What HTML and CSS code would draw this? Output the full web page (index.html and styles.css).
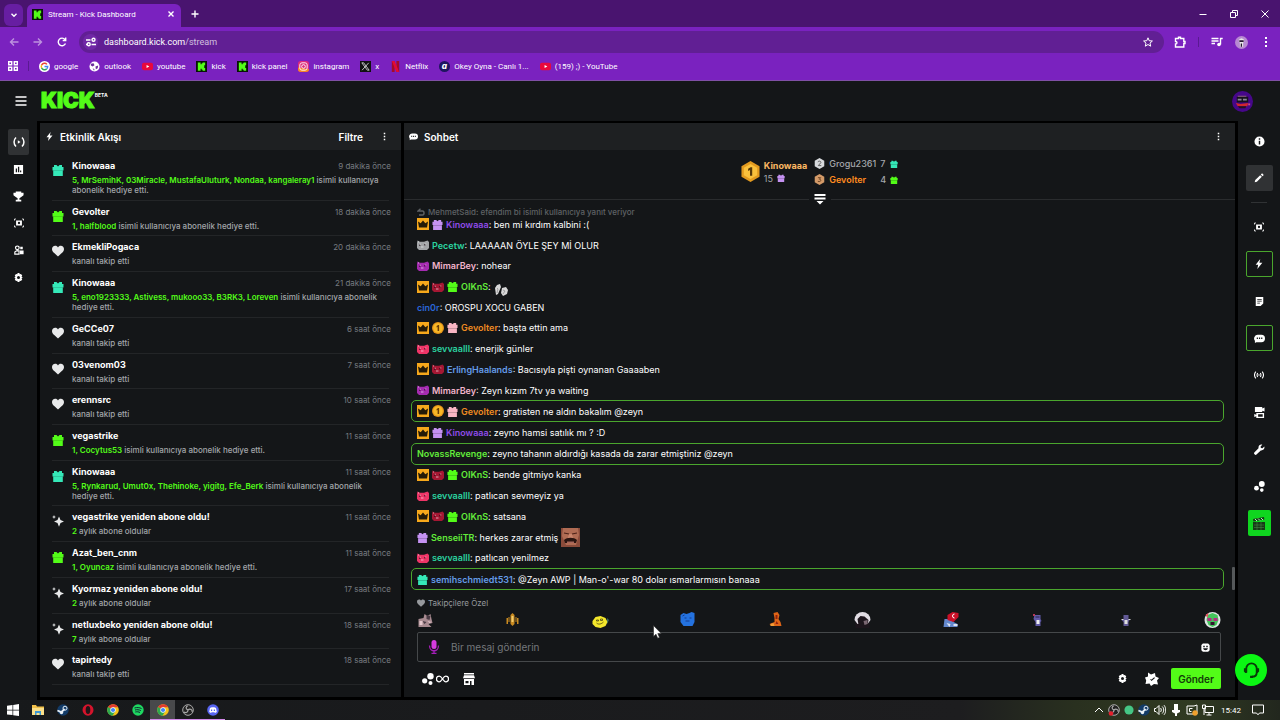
FILE: index.html
```html
<!DOCTYPE html>
<html lang="tr">
<head>
<meta charset="utf-8">
<title>Stream - Kick Dashboard</title>
<link rel="stylesheet" href="styles.css">
</head>
<body>
<svg class="sprite" aria-hidden="true">
  <symbol id="gift" viewBox="0 0 12 12"><path d="M2 1h2.500l1.500 1.500L7.500 1H10v2h1.500v3.500H.5V3H2zM1.200 6.800h9.600V12H1.200z"/><path d="M1.200 6.200h9.600v.8H1.200z" opacity=".45"/></symbol>
  <symbol id="heart" viewBox="0 0 12 12"><path d="M3.200.8C4.500.8 5.500 1.500 6 2.400 6.500 1.500 7.500.8 8.800.8 10.700.8 12 2.200 12 4c0 1.700-.9 2.800-2.200 4.100L6 11.500 2.200 8.100C.9 6.800 0 5.700 0 4 0 2.200 1.300.8 3.200.8z"/></symbol>
  <symbol id="sparkle" viewBox="0 0 12 12"><path d="M7 1.500l1.500 3.500L12 6.500 8.500 8 7 11.800 5.500 8 2 6.500 5.500 5z"/><path d="M2 0l.6 1.400L4 2l-1.400.6L2 4l-.6-1.400L0 2l1.400-.6z"/></symbol>
  <symbol id="bolt" viewBox="0 0 12 12"><path d="M7.500 0L2 7h3L4 12l6-7.500H6.500z"/></symbol>
  <symbol id="dots" viewBox="0 0 12 12"><path d="M5 1h2v2H5zM5 5h2v2H5zM5 9h2v2H5z"/></symbol>
  <symbol id="chat" viewBox="0 0 12 12"><path fill-rule="evenodd" d="M4 2h4a4 4 0 0 1 0 8H2.500L1 11V8.500A4 4 0 0 1 4 2zM3 5v1.500h1.300V5zm2.400 0v1.500h1.300V5zm2.400 0v1.500h1.300V5z"/></symbol>
  <symbol id="gear" viewBox="0 0 12 12"><path fill-rule="evenodd" d="M4.800 0h2.400l.4 1.700 1.700-.5 1.700 2-1 1.400L11.500 6 10 7.400l1 1.400-1.700 2-1.700-.5L7.200 12H4.800l-.4-1.700-1.700.5L1 8.800l1-1.400L.5 6 2 4.600 1 3.200l1.700-2 1.700.5zM6 4a2 2 0 1 0 0 4 2 2 0 0 0 0-4z"/></symbol>
  <symbol id="live" viewBox="0 0 12 12"><path d="M3 1.500C.4 4 .4 8 3 10.500M9 1.500c2.600 2.500 2.600 6.500 0 9" fill="none" stroke="currentColor" stroke-width="1.500"/><path d="M4.800 4.200l2.700 1.800-2.700 1.800z"/></symbol>
  <symbol id="cast" viewBox="0 0 12 12"><path d="M2.200 2C.2 4.500.2 7.500 2.200 10M9.800 2c2 2.500 2 5.500 0 8M4.400 3.500c-1 1.700-1 3.300 0 5M7.600 3.500c1 1.700 1 3.300 0 5" fill="none" stroke="currentColor" stroke-width="1.300"/><path d="M5.400 5.200h1.200v1.600H5.400z"/></symbol>
  <symbol id="chart" viewBox="0 0 12 12"><path fill-rule="evenodd" d="M1 1h10v10H1zM3 5v4h1.400V5zm2.400-2v6h1.400V3zm2.300 4v2H9V7z"/></symbol>
  <symbol id="cup" viewBox="0 0 12 12"><path d="M3 .5h6V2h2.500v2.500L9 6.500 7 8v1.500h2V11.500H3V9.500h2V8L3 6.500.5 4.500V2H3z"/></symbol>
  <symbol id="scene" viewBox="0 0 12 12"><path fill-rule="evenodd" d="M2.500 3h7v6h-7zM6 4.600a1.400 1.400 0 1 0 0 2.800 1.400 1.400 0 0 0 0-2.800z"/><path d="M.6 3V1.200H2.300M9.700 1.200h1.700V3M11.400 9v1.800H9.700M2.300 10.800H.6V9" fill="none" stroke="currentColor"/></symbol>
  <symbol id="people" viewBox="0 0 12 12"><path d="M1 11V8.500l2-1.500h3v4zM4 1.200A2.200 2.200 0 1 1 4 5.600 2.200 2.200 0 0 1 4 1.200z" fill="none" stroke="currentColor" stroke-width="1.400"/><path d="M7.500 2h3v3.200h-3zM7 6.500h4.500V11H7z"/></symbol>
  <symbol id="info" viewBox="0 0 12 12"><path fill-rule="evenodd" d="M6 .5a5.500 5.500 0 1 1 0 11 5.500 5.500 0 0 1 0-11zM5.200 2.500v1.600h1.600V2.500zm0 2.700v4.200h1.600V5.200z"/></symbol>
  <symbol id="pen" viewBox="0 0 12 12"><path d="M8.200 1.800L9.700.3l2 2-1.500 1.500zM7.400 2.600l2 2L3.500 10.500.8 11.200l.7-2.700z"/></symbol>
  <symbol id="note" viewBox="0 0 12 12"><path fill-rule="evenodd" d="M1 0h10v8.500L7.500 12H1zM3 2.500v1h6v-1zm0 2.500v1h6V5zm0 2.500v1h3.500v-1z"/></symbol>
  <symbol id="screens" viewBox="0 0 12 12"><path fill-rule="evenodd" d="M1 0h8v1.500L11.500.5V5L9 4v1.500H1zM2.500 6.500h8.500V12H2.500V10L.3 11V7.500l2.200 1zM4.500 8v2.500h5V8z"/></symbol>
  <symbol id="wrench" viewBox="0 0 12 12"><path d="M11.200 2.800L9.300 4.600 7.500 4.300 7.200 2.600 9 .7C7 0 4.600 1.500 4.900 4.600L.6 8.900a1.600 1.600 0 0 0 2.400 2.400l4.400-4.300c3 .3 4.600-2 3.800-4.200z"/></symbol>
  <symbol id="bubbles" viewBox="0 0 12 12"><circle cx="8.500" cy="3.300" r="3.200"/><circle cx="2.700" cy="7.800" r="2.600"/><circle cx="8.500" cy="9.900" r="2"/></symbol>
  <symbol id="k" viewBox="0 0 12 12"><path fill="#071407" d="M0 0h12v12H0z"/><path fill="#53fc18" d="M2 1.500h3v2h1.200v-1h1v-1H10v3H9v3h1v3H7.200v-1h-1v-1H5v2H2z"/></symbol>
  <symbol id="yt" viewBox="0 0 12 12"><rect y="2" width="12" height="8" rx="2" fill="#e8083c"/><path d="M5 4.300L8 6 5 7.700z" fill="#fff"/></symbol>
  <symbol id="chrome" viewBox="0 0 12 12"><circle cx="6" cy="6" r="5.800" fill="#f4c41c"/><path d="M6 6L1 3.100A5.800 5.800 0 0 1 11.200 3.300H6z" fill="#e33b2e"/><path d="M6 6L1 3.100A5.800 5.800 0 0 0 5.500 11.800L8.300 7.300z" fill="#2da94f"/><circle cx="6" cy="6" r="2.700" fill="#fff"/><circle cx="6" cy="6" r="2.100" fill="#4285f4"/></symbol>
  <symbol id="crown" viewBox="0 0 12 12"><path fill="#f7a81b" d="M0 0h12v12H0z"/><path fill="#241a08" d="M1 3.500l2.700 1.700L6 2.500l2.300 2.700L11 3.500 10 9.500H2z"/></symbol>
  <symbol id="coin" viewBox="0 0 12 12"><circle cx="6" cy="6" r="6" fill="#e69318"/><circle cx="6" cy="6" r="4.800" fill="#f8b827"/><path d="M4.600 4L6.200 3h.9v6H5.600V5l-1 .4z" fill="#6a3d05"/></symbol>
  <symbol id="cat" viewBox="0 0 12 12"><path d="M.5 1.500L3 2.800h4L10.500 1.500 12 3v6l-2 2H2L0 9V4z"/><path d="M2 5.500h1.500V7H2zM7 5h1.500v1.500H7z" fill="#1b0710" opacity=".6"/><path d="M4 7.500h2.500v1H4zM2.800 4.800h1v1h-1zM8.300 4.500h1v1h-1zM1 2.500h1v1H1z" fill="#fff" opacity=".6"/></symbol>
  <symbol id="obs" viewBox="0 0 12 12"><circle cx="6" cy="6" r="5.300" fill="#222" stroke="#aaa"/><path d="M6 6C3 5 4 2 6 2M6 6c2-2 5 0 4 2M6 6c0 3-3 3-4 2" fill="none" stroke="#aaa" stroke-width="1.200"/></symbol>
  <symbol id="steam" viewBox="0 0 12 12"><circle cx="6" cy="6" r="5.700" fill="#123b68"/><path d="M.4 6.500l4 1.600L7.500 5" fill="none" stroke="#e7eff6" stroke-width="1.800"/><circle cx="8" cy="4.200" r="2" fill="none" stroke="#e7eff6"/><circle cx="4.500" cy="8.500" r="1.700" fill="#e7eff6"/></symbol>
</svg>

<header class="browser">
  <div class="tabstrip">
    <button class="tab-search" aria-label="Sekme ara"><svg class="i8" viewBox="0 0 8 8"><path d="M1.500 2.700L4 5.200l2.500-2.500" class="line"/></svg></button>
    <div class="tab"><svg class="i11"><use href="#k"/></svg><span>Stream - Kick Dashboard</span><button aria-label="Kapat"><svg class="i8" viewBox="0 0 8 8"><path d="M1.500 1.500l5 5m0-5l-5 5" class="line"/></svg></button></div>
    <button class="newtab" aria-label="Yeni sekme"><svg class="i8" viewBox="0 0 8 8"><path d="M4 .5v7M.5 4h7" class="line"/></svg></button>
    <div class="window-controls">
      <button aria-label="Küçült"><svg class="i8" viewBox="0 0 8 8"><path d="M.5 4.500h7" class="thin"/></svg></button>
      <button aria-label="Önceki boyut"><svg class="i8" viewBox="0 0 8 8"><path d="M.5 2.500h5v5h-5zM2.500 2.500v-2h5v5h-2" class="thin"/></svg></button>
      <button aria-label="Pencereyi kapat"><svg class="i8" viewBox="0 0 8 8"><path d="M.5.5l7 7m0-7l-7 7" class="thin"/></svg></button>
    </div>
  </div>
  <div class="toolbar">
    <button class="nav dim" aria-label="Geri"><svg class="i10" viewBox="0 0 10 10"><path d="M9.500 5H1.500M5 1.500L1.500 5 5 8.500" class="line"/></svg></button>
    <button class="nav dim" aria-label="İleri"><svg class="i10" viewBox="0 0 10 10"><path d="M.5 5h8M5 1.500L8.500 5 5 8.500" class="line"/></svg></button>
    <button aria-label="Yenile"><svg class="i10" viewBox="0 0 10 10"><path d="M8.500 6.500A3.800 3.800 0 1 1 8 2.500M8.700.5v3H5.700" class="line"/></svg></button>
    <div class="omnibox">
      <button class="site" aria-label="Site bilgileri"><svg class="i10" viewBox="0 0 10 10"><path d="M0 3h4.500M5.500 7.500H10M0 7.500h1" class="line"/><circle cx="7.500" cy="2.800" r="1.500" class="line"/><circle cx="2.700" cy="7.300" r="1.500" class="line"/></svg></button>
      <span class="url">dashboard.kick.com<span>/stream</span></span>
      <button aria-label="Yer işareti"><svg class="i10" viewBox="0 0 10 10"><path d="M5 .8l1.200 2.900 3.200.3-2.400 2.100.7 3.100L5 7.500 2.300 9.200 3 6.100.6 4l3.200-.3z" class="thin"/></svg></button>
    </div>
    <button aria-label="Uzantılar"><svg class="i12" viewBox="0 0 12 12"><path d="M1.500 2.500h3V1.300h2v1.200h3.300v3H11v2H9.800V11H1.500V8c2 0 2-2.500 0-2.500z" class="line"/></svg></button>
    <span class="rule"></span>
    <button aria-label="Medya"><svg class="i12" viewBox="0 0 12 12"><path d="M.5 2.500h7M.5 5h7M.5 7.500h3.500M9.500 8.500V2.500h2.200" class="line"/><circle cx="8" cy="8.500" r="1.800" fill="currentColor"/></svg></button>
    <button aria-label="Profil"><svg class="i13" viewBox="0 0 12 12"><circle cx="6" cy="6" r="6" fill="#b789d2"/><path d="M4 3l2-1 2 1 .5 2-1 1v4h-3V6l-1-1z" fill="#e8e8e8"/><path d="M4 4h4v1.500H4zM5.300 7h1.200v3H5.300z" fill="#281535"/></svg></button>
    <button aria-label="Menü"><svg class="i12"><use href="#dots"/></svg></button>
  </div>
  <nav class="bookmarks">
    <a href="#" aria-label="Uygulamalar"><svg class="i10" viewBox="0 0 10 10"><path d="M.7.7h3v3h-3zM6.300.7h3v3h-3zM.7 6.300h3v3h-3zM6.300 6.300h3v3h-3z" class="line"/></svg></a>
    <span class="rule"></span>
    <a href="#"><svg class="i11" viewBox="0 0 12 12"><circle cx="6" cy="6" r="6" fill="#fff"/><path d="M8.700 3.700A3.500 3.500 0 0 0 2.800 4.500" fill="none" stroke="#e94235" stroke-width="1.500"/><path d="M2.800 4.500a3.500 3.500 0 0 0 0 3" fill="none" stroke="#fbbc04" stroke-width="1.500"/><path d="M2.800 7.500a3.500 3.500 0 0 0 5.700 1" fill="none" stroke="#34a853" stroke-width="1.500"/><path d="M6 6h3.500A3.500 3.500 0 0 1 8.500 8.500" fill="none" stroke="#4285f4" stroke-width="1.500"/></svg>google</a>
    <a href="#"><svg class="i11" viewBox="0 0 12 12"><circle cx="6" cy="6" r="5.500" fill="#fff"/><path d="M2 3l3-.5 1 2L4 6 2 5zM7 6l3-1-.5 3-2 1zM4 8l2 1-.5 1.500z" fill="#6b2d9c"/></svg>outlook</a>
    <a href="#"><svg class="i11"><use href="#yt"/></svg>youtube</a>
    <a href="#"><svg class="i11"><use href="#k"/></svg>kick</a>
    <a href="#"><svg class="i11"><use href="#k"/></svg>kick panel</a>
    <a href="#"><svg class="i11" viewBox="0 0 12 12"><rect width="12" height="12" rx="3" fill="#dd2a7b"/><path d="M0 7l12 2v0a3 3 0 0 1-3 3H3a3 3 0 0 1-3-3z" fill="#f58529"/><rect x="2" y="2" width="8" height="8" rx="2.300" fill="none" stroke="#fff"/><circle cx="6" cy="6" r="2" fill="none" stroke="#fff"/></svg>instagram</a>
    <a href="#"><svg class="i11" viewBox="0 0 12 12"><path d="M0 0h12v12H0z" fill="#111"/><path d="M2 2h2l6 8H8zM9.500 2L2.300 10" fill="none" stroke="#ccc"/></svg>x</a>
    <a href="#"><svg class="i11" viewBox="0 0 12 12"><path d="M2 0h3v12H2zM7 0h3v12H7z" fill="#a50b28"/><path d="M2 0h3l5 12H7z" fill="#e50933"/></svg>Netflix</a>
    <a href="#"><svg class="i11" viewBox="0 0 12 12"><circle cx="6" cy="6" r="6" fill="#1f1560"/><text x="3" y="9" font-family="Inter" font-size="9" font-weight="800" font-style="italic" fill="#fff">a</text></svg>Okey Oyna - Canlı 1...</a>
    <a href="#"><svg class="i11"><use href="#yt"/></svg>(159) ;) - YouTube</a>
  </nav>
</header>

<div class="appbar">
  <button aria-label="Menü"><svg class="i12" viewBox="0 0 12 12"><path d="M.5 2h11M.5 6h11M.5 10h11" class="line"/></svg></button>
  <a href="#" class="logo">KICK<sup>BETA</sup></a>
  <button class="avatar" aria-label="Hesap"><svg viewBox="0 0 22 22"><circle cx="11" cy="11" r="11" fill="#46078a"/><path d="M5 6h12v6H5z" fill="#17121e"/><path d="M6 5h9v1H6z" fill="#8c6a72"/><path d="M6 8h4v2H6zM11.500 8h4v2h-4z" fill="#8c8799"/><path d="M4 12.500l5 1 8-1-1 3.500H6z" fill="#d1262e"/><path d="M6 16h9l-1 2H8z" fill="#27101c"/><path d="M17 13h2v2h-2z" fill="#c64a8a"/></svg></button>
</div>

<div class="workspace">
  <nav class="side">
    <button class="on" aria-label="Yayın"><svg class="i12"><use href="#live"/></svg></button>
    <button aria-label="Analiz"><svg class="i11"><use href="#chart"/></svg></button>
    <button aria-label="Başarımlar"><svg class="i11"><use href="#cup"/></svg></button>
    <button aria-label="Klipler"><svg class="i10"><use href="#scene"/></svg></button>
    <button aria-label="Topluluk"><svg class="i10"><use href="#people"/></svg></button>
    <button aria-label="Ayarlar"><svg class="i9"><use href="#gear"/></svg></button>
  </nav>

  <section class="panel activity">
    <header class="panel-head"><svg class="i9"><use href="#bolt"/></svg><h2>Etkinlik Akışı</h2><button class="filter">Filtre</button><button aria-label="Seçenekler"><svg class="i9"><use href="#dots"/></svg></button></header>
    <ul class="events">
      <li><svg class="i12 teal"><use href="#gift"/></svg><div><div class="top"><b>Kinowaaa</b><time>9 dakika önce</time></div><p><em>5, MrSemihK, 03Miracle, MustafaUluturk, Nondaa, kangaleray1</em> isimli kullanıcıya abonelik hediye etti.</p></div></li>
      <li><svg class="i12 green"><use href="#gift"/></svg><div><div class="top"><b>Gevolter</b><time>18 dakika önce</time></div><p><em>1, halfblood</em> isimli kullanıcıya abonelik hediye etti.</p></div></li>
      <li><svg class="i12"><use href="#heart"/></svg><div><div class="top"><b>EkmekliPogaca</b><time>20 dakika önce</time></div><p>kanalı takip etti</p></div></li>
      <li><svg class="i12 teal"><use href="#gift"/></svg><div><div class="top"><b>Kinowaaa</b><time>21 dakika önce</time></div><p><em>5, eno1923333, Astivess, mukooo33, B3RK3, Loreven</em> isimli kullanıcıya abonelik hediye etti.</p></div></li>
      <li><svg class="i12"><use href="#heart"/></svg><div><div class="top"><b>GeCCe07</b><time>6 saat önce</time></div><p>kanalı takip etti</p></div></li>
      <li><svg class="i12"><use href="#heart"/></svg><div><div class="top"><b>03venom03</b><time>7 saat önce</time></div><p>kanalı takip etti</p></div></li>
      <li><svg class="i12"><use href="#heart"/></svg><div><div class="top"><b>erennsrc</b><time>10 saat önce</time></div><p>kanalı takip etti</p></div></li>
      <li><svg class="i12 green"><use href="#gift"/></svg><div><div class="top"><b>vegastrike</b><time>11 saat önce</time></div><p><em>1, Cocytus53</em> isimli kullanıcıya abonelik hediye etti.</p></div></li>
      <li><svg class="i12 teal"><use href="#gift"/></svg><div><div class="top"><b>Kinowaaa</b><time>11 saat önce</time></div><p><em>5, Rynkarud, Umut0x, Thehinoke, yigitg, Efe_Berk</em> isimli kullanıcıya abonelik hediye etti.</p></div></li>
      <li><svg class="i12"><use href="#sparkle"/></svg><div><div class="top"><b>vegastrike yeniden abone oldu!</b><time>11 saat önce</time></div><p><em>2</em> aylık abone oldular</p></div></li>
      <li><svg class="i12 green"><use href="#gift"/></svg><div><div class="top"><b>Azat_ben_cnm</b><time>11 saat önce</time></div><p><em>1, Oyuncaz</em> isimli kullanıcıya abonelik hediye etti.</p></div></li>
      <li><svg class="i12"><use href="#sparkle"/></svg><div><div class="top"><b>Kyormaz yeniden abone oldu!</b><time>17 saat önce</time></div><p><em>2</em> aylık abone oldular</p></div></li>
      <li><svg class="i12"><use href="#sparkle"/></svg><div><div class="top"><b>netluxbeko yeniden abone oldu!</b><time>18 saat önce</time></div><p><em>7</em> aylık abone oldular</p></div></li>
      <li><svg class="i12"><use href="#heart"/></svg><div><div class="top"><b>tapirtedy</b><time>18 saat önce</time></div><p>kanalı takip etti</p></div></li>
    </ul>
  </section>

  <section class="panel chat">
    <header class="panel-head"><svg class="i9"><use href="#chat"/></svg><h2>Sohbet</h2><button class="end" aria-label="Seçenekler"><svg class="i9"><use href="#dots"/></svg></button></header>
    <div class="leaders">
      <svg class="medal" viewBox="0 0 20 22"><path d="M10 0l9.500 5.500v11L10 22 .5 16.500v-11z" fill="#e39a1f"/><path d="M10 3l7 4v8l-7 4-7-4V7z" fill="#fbc13c"/><path d="M7.500 8.200L10 6.500h1.800v9H9.500v-6l-2 1z" fill="#54370a"/></svg>
      <div class="first"><b>Kinowaaa</b><span>15 <svg class="i8 lilac"><use href="#gift"/></svg></span></div>
      <div class="rest">
        <svg class="i11" viewBox="0 0 12 12"><path d="M6 0l5.200 3v6L6 12 .8 9V3z" fill="#d7d9dc"/><path d="M4.300 4.500C4.500 3 7.700 3 7.500 5L4.700 8.300h3.200" fill="none" stroke="#555"/></svg><span>Grogu2361</span><span>7</span><svg class="i8 teal"><use href="#gift"/></svg>
        <svg class="i11" viewBox="0 0 12 12"><path d="M6 0l5.200 3v6L6 12 .8 9V3z" fill="#d39a68"/><path d="M4.300 4h3L5.800 5.700c2.800 0 2 3.500-1.600 2.300" fill="none" stroke="#694020"/></svg><b>Gevolter</b><span>4</span><svg class="i8 green"><use href="#gift"/></svg>
      </div>
    </div>
    <div class="handle"><button aria-label="Genişlet"><svg class="i12" viewBox="0 0 12 12"><path d="M.5 1h11v2H.5zM.5 4.500h11v2H.5zM2.500 8h7L6 11.500z"/></svg></button></div>
    <p class="reply"><svg class="i8" viewBox="0 0 8 8"><path d="M3.500.8L1 3h4.500c2 0 2 4 0 4H2" class="line"/></svg>MehmetSaid: efendim bi isimli kullanıcıya yanıt veriyor</p>
    <ol class="messages">
      <li><svg class="i12"><use href="#crown"/></svg><svg class="i11 lilac"><use href="#gift"/></svg><span><b class="c-violet">Kinowaaa</b>: ben mi kırdım kalbini :(</span></li>
      <li><svg class="i12 c-gray"><use href="#cat"/></svg><span><b class="c-mint">Pecetw</b>: LAAAAAN ÖYLE ŞEY Mİ OLUR</span></li>
      <li><svg class="i12 c-plum"><use href="#cat"/></svg><span><b class="c-pink">MimarBey</b>: nohear</span></li>
      <li><svg class="i12"><use href="#crown"/></svg><svg class="i12 c-red"><use href="#cat"/></svg><svg class="i11 green"><use href="#gift"/></svg><span><b class="c-lime">OIKnS</b>:</span><svg class="i14 feet" viewBox="0 0 14 14"><path d="M1 5l2-3 3-1 1 3-3 7-2 1zM8 5l4-1 2 3-1 4-4 2-2-3z" fill="#d8d8d8"/><path d="M3 5l1 1-1 4M9 7l2 1-2 3" stroke="#777" fill="none" stroke-width=".6"/></svg></li>
      <li><span><b class="c-blue">cin0r</b>: OROSPU XOCU GABEN</span></li>
      <li><svg class="i12"><use href="#crown"/></svg><svg class="i12"><use href="#coin"/></svg><svg class="i11 rose"><use href="#gift"/></svg><span><b class="c-orange">Gevolter</b>: başta ettin ama</span></li>
      <li><svg class="i12 c-hot"><use href="#cat"/></svg><span><b class="c-mint">sevvaalll</b>: enerjik günler</span></li>
      <li><svg class="i12"><use href="#crown"/></svg><svg class="i12 c-red"><use href="#cat"/></svg><span><b class="c-sky">ErlingHaalands</b>: Bacısıyla pişti oynanan Gaaaaben</span></li>
      <li><svg class="i12 c-plum"><use href="#cat"/></svg><span><b class="c-pink">MimarBey</b>: Zeyn kızım 7tv ya waiting</span></li>
      <li class="hit"><svg class="i12"><use href="#crown"/></svg><svg class="i12"><use href="#coin"/></svg><svg class="i11 rose"><use href="#gift"/></svg><span><b class="c-orange">Gevolter</b>: gratisten ne aldın bakalım @zeyn</span></li>
      <li><svg class="i12"><use href="#crown"/></svg><svg class="i11 lilac"><use href="#gift"/></svg><span><b class="c-violet">Kinowaaa</b>: zeyno hamsi satılık mı ? :D</span></li>
      <li class="hit"><span><b class="c-lime">NovassRevenge</b>: zeyno tahanın aldırdığı kasada da zarar etmiştiniz @zeyn</span></li>
      <li><svg class="i12"><use href="#crown"/></svg><svg class="i12 c-red"><use href="#cat"/></svg><svg class="i11 green"><use href="#gift"/></svg><span><b class="c-lime">OIKnS</b>: bende gitmiyo kanka</span></li>
      <li><svg class="i12 c-hot"><use href="#cat"/></svg><span><b class="c-mint">sevvaalll</b>: patlıcan sevmeyiz ya</span></li>
      <li><svg class="i12"><use href="#crown"/></svg><svg class="i12 c-red"><use href="#cat"/></svg><svg class="i11 green"><use href="#gift"/></svg><span><b class="c-lime">OIKnS</b>: satsana</span></li>
      <li><svg class="i11 lilac"><use href="#gift"/></svg><span><b class="c-lime">SenseiiTR</b>: herkes zarar etmiş</span><svg class="face" viewBox="0 0 19 19"><path d="M0 0h19v19H0z" fill="#8a4b3a"/><path d="M2 0h15l1 7-3 10H5L1 8z" fill="#b06c54"/><path d="M3 5l5 1M11 6l5-1" stroke="#4b2118" stroke-width="1.200"/><path d="M8 6l-1 4h5l-1-4z" fill="#c9846b"/><path d="M3 12c3-3 10-3 13 0l-1 3H4z" fill="#2a1410"/><path d="M6 13.500h7V15H6z" fill="#a5665a"/></svg></li>
      <li><svg class="i12 c-hot"><use href="#cat"/></svg><span><b class="c-mint">sevvaalll</b>: patlıcan yenilmez</span></li>
      <li class="hit"><svg class="i11 teal"><use href="#gift"/></svg><span><b class="c-sky">semihschmiedt531</b>: @Zeyn AWP | Man-o'-war 80 dolar ısmarlarmısın banaaa</span></li>
    </ol>
    <i class="thumb"></i>
    <footer class="composer">
      <p class="mode"><svg class="i8"><use href="#heart"/></svg>Takipçilere Özel</p>
      <div class="emotes">
        <svg viewBox="0 0 16 16"><path d="M1 7l5-1 1-4 3 2 3-2 1 5 1 4-4 1 3 3H1z" fill="#a88b91"/><path d="M9 3l4 1-1 4-3-1zM5 9l4 1-2 2z" fill="#493b44"/><path d="M2 9h3v4H2zM10 9l4 1-2 1z" fill="#e5c9cd"/></svg>
        <svg viewBox="0 0 16 16"><path d="M6 3l2-2 2 2v9l-2 2-2-2zM2 6h1.500v6H2zM4 5h1v5H4zM11 5h1v5h-1zM12.500 6H14v6h-1.500z" fill="#c98a20"/><path d="M7 4h2v6H7z" fill="#f5cd6b"/></svg>
        <svg viewBox="0 0 16 16"><path d="M0 9l3-4 5-1 5 2 2 4-2 4-5 2-5-1-3-3z" fill="#f4e72b"/><path d="M4 8h2v1H4zM8 7h2v1.500H8zM4 11c2 2 5 1 7-1" fill="none" stroke="#4d4613" stroke-width=".8"/><path d="M15 6l1 2-1 4z" fill="#5cb8a0"/></svg>
        <svg viewBox="0 0 16 16"><path d="M1 3l3-2 3 1 3-1 2-1 3 1v9l-2 4H4L1 10z" fill="#2472df"/><path d="M5 6h2M10 6h2M6 9h4M3 4l2-1" fill="none" stroke="#153d8f"/></svg>
        <svg viewBox="0 0 16 16"><path d="M6 1l4-1 2 3-1 4 2 3 1 4H4l-2-2 5-2V6z" fill="#df6517"/><path d="M8 3h2v4H8zM9 9l2 3H8z" fill="#8f220e"/><path d="M3 12l3-1 1 3H3z" fill="#f19d36"/></svg>
        <svg viewBox="0 0 16 16"><path d="M1 8h14v8H1z" fill="#1d151c"/><path d="M0 8a8 8 0 0 1 16 0l-3 4H3z" fill="#e0dce3"/><path d="M3 7l3-3 4 .5 4 3.500-1 5H4z" fill="#1d151c"/><path d="M9 9l4-1v4l-3 1z" fill="#7b6873"/></svg>
        <svg viewBox="0 0 16 16"><path d="M2 7h5l4 3 4 2v3H1z" fill="#6387cc"/><path d="M4 11l4 1-1 3zM11 12h4v2h-4z" fill="#dbe3f2"/><path d="M5 3l5-3 6 1v4l-5 5-6-2z" fill="#cb1028"/><path d="M12 2a2 2 0 1 0 0 4" fill="none" stroke="#fff"/></svg>
        <svg viewBox="0 0 16 16"><path d="M5 3h6v4l1 2-1 1v4H6v-4L4 7z" fill="#615aa7"/><path d="M7 8h3v4H7z" fill="#eee"/><path d="M6 4.500h4v1H6z" fill="#29254b"/><path d="M3.500 2h2v2h-2z" fill="#b73a57"/></svg>
        <svg viewBox="0 0 16 16"><path d="M6 3h5v4l1 1-1 2v4H6v-4L4 8l2-1z" fill="#625a96"/><path d="M7 8h3v4H7zM4 7h2v1H4zM11 7h2v1h-2z" fill="#ddd"/></svg>
        <svg viewBox="0 0 16 16"><circle cx="8" cy="8" r="8" fill="#dfe5e3"/><path d="M3 3l5-2 5 2 1 5-2 5-4 2-4-2-2-5z" fill="#44c45b"/><path d="M3 6h4v3H3zM9 6h4v3H9z" fill="#b62985"/><path d="M6 10h4v3H6z" fill="#35122f"/><path d="M1 3l3-2-1 5z" fill="#eb4f5c"/></svg>
      </div>
      <label class="field"><svg class="mic" viewBox="0 0 12 14"><rect x="3.500" width="5" height="9" rx="2.500" fill="#d63be0"/><path d="M1.500 5.500c0 7 9 7 9 0M6 11v2.500M3.500 13.500h5" fill="none" stroke="#a51fb8" stroke-width="1.300"/></svg><input type="text" placeholder="Bir mesaj gönderin" aria-label="Bir mesaj gönderin"><svg class="i9" viewBox="0 0 12 12"><path fill-rule="evenodd" d="M2.500.5h7l2 2v7l-2 2h-7l-2-2v-7zM3 3.500v2h2v-2zm4 0v2h2v-2zM2.800 7c.5 3.500 6 3.500 6.400 0z"/></svg></label>
      <div class="actions">
        <button aria-label="Puanlar"><svg class="i12"><use href="#bubbles"/></svg><svg class="inf" viewBox="0 0 14 8"><path d="M7 4C5 1 4 1 3.500 1a3 3 0 0 0 0 6C4 7 5 7 7 4s3-3 3.500-3a3 3 0 0 1 0 6C10 7 9 7 7 4z" class="line"/></svg></button>
        <button aria-label="Mağaza"><svg class="i12" viewBox="0 0 12 12"><path fill-rule="evenodd" d="M1 0h10v1.500H1zM1 2.200h10l1 3H0zM1 6h10v6H8.500V8H7v4H1zm1.500 2v2.200H5.500V8z"/></svg></button>
        <button class="push" aria-label="Sohbet ayarları"><svg class="i9"><use href="#gear"/></svg></button>
        <button aria-label="Rozet"><svg class="i14" viewBox="0 0 14 14"><path fill-rule="evenodd" d="M3 .5l3 2 4-1.500.5 3.500 3.500 1.500-2 2.500 1 4-4-.5L6 14l-1.500-2.500L.5 12l.7-3.500L0 5.500l3-1zM4.800 7L6.500 9 10 6l-.8-.8L6.500 7.500z"/></svg></button>
        <button class="send">Gönder</button>
      </div>
    </footer>
  </section>

  <nav class="rail">
    <button aria-label="Bilgi"><svg class="i11"><use href="#info"/></svg></button>
    <button class="on" aria-label="Düzenle"><svg class="i10"><use href="#pen"/></svg></button>
    <hr>
    <button aria-label="Önizleme"><svg class="i10"><use href="#scene"/></svg></button>
    <button class="ring" aria-label="Etkinlik"><svg class="i10"><use href="#bolt"/></svg></button>
    <button aria-label="Notlar"><svg class="i9"><use href="#note"/></svg></button>
    <button class="ring" aria-label="Sohbet"><svg class="i11"><use href="#chat"/></svg></button>
    <button aria-label="Yayın durumu"><svg class="i10"><use href="#cast"/></svg></button>
    <button aria-label="Sahneler"><svg class="i11"><use href="#screens"/></svg></button>
    <button aria-label="Araçlar"><svg class="i11"><use href="#wrench"/></svg></button>
    <button aria-label="Puanlar"><svg class="i11"><use href="#bubbles"/></svg></button>
    <button class="clip" aria-label="Klip"><svg class="i14" viewBox="0 0 14 14"><path d="M1 3l11-2 .4 2.500-11 2zM1 6h12v8H1z" fill="#173b17"/><path d="M3 3l2 2M6 2.500l2 2M9 2l2 2" stroke="#b9e8b9"/><path d="M2 9h10M2 11.500h10M5 6v8M9 6v8" stroke="#4e8e4e" stroke-width=".5"/></svg></button>
  </nav>
  <button class="help" aria-label="Destek"><svg viewBox="0 0 20 20"><path d="M4.500 12V8a5.500 5.500 0 0 1 11 0v4c0 3-2 4.500-5 4.500" fill="none" stroke="#083a08" stroke-width="2"/><path d="M2 7.500h3v5H3.500L2 11zM15 7.500h3V11l-1.500 1.500H15zM8.500 15.500h3v2.500h-3z" fill="#083a08"/></svg></button>
</div>

<footer class="taskbar">
  <button aria-label="Başlat"><svg class="i12" viewBox="0 0 12 12"><path d="M0 1.700L5.500 1v4.700H0zM6.200.9L12 0v5.700H6.200zM0 6.400h5.500v4.700L0 10.400zM6.200 6.400H12V12l-5.800-.8z"/></svg></button>
  <button aria-label="Dosyalar"><svg class="i12" viewBox="0 0 12 12"><path d="M0 1h4l1 1.500h7V11H0z" fill="#f2c14b"/><path d="M0 4h12v7H0z" fill="#fbe08a"/><path d="M3 7h6v4H7.500V9h-3v2H3z" fill="#3d97d3"/></svg></button>
  <button aria-label="Steam"><svg class="i12"><use href="#steam"/></svg></button>
  <button aria-label="Opera"><svg class="i12" viewBox="0 0 12 12"><ellipse cx="6" cy="6" rx="5.500" ry="5.800" fill="#d4142c"/><ellipse cx="6" cy="6" rx="2.300" ry="4" fill="#231518"/></svg></button>
  <button aria-label="Chrome"><svg class="i12"><use href="#chrome"/></svg></button>
  <button aria-label="Spotify"><svg class="i12" viewBox="0 0 12 12"><circle cx="6" cy="6" r="5.700" fill="#1ed760"/><path d="M2.500 4c2.500-.8 5-.5 7 .5M3 6c2-.6 4-.3 5.800.6M3.300 8c1.700-.5 3.300-.2 4.700.5" fill="none" stroke="#123"/></svg></button>
  <button class="open front" aria-label="Kick Dashboard"><svg class="i12"><use href="#chrome"/></svg></button>
  <button class="open" aria-label="OBS"><svg class="i12"><use href="#obs"/></svg></button>
  <button class="open" aria-label="Discord"><svg class="i12" viewBox="0 0 12 12"><circle cx="6" cy="6" r="5.800" fill="#5865f2"/><path fill-rule="evenodd" d="M3 4l1.700-.8h2.600L9 4l.8 4L8 9l-.6-.8H4.600L4 9 2.200 8zM4 5.500v1.400h1.200V5.500zm2.800 0v1.400H8V5.500z" fill="#fff"/></svg></button>
  <div class="tray">
    <svg class="i10" viewBox="0 0 10 10"><path d="M1 7l4-4 4 4" class="thin"/></svg>
    <svg class="i12" viewBox="0 0 12 12"><use href="#obs"/><circle cx="3" cy="9.500" r="2.300" fill="#e3202c"/></svg>
    <svg class="i10" viewBox="0 0 12 12"><circle cx="6" cy="6" r="5.500" fill="#45c685"/></svg>
    <svg class="i12"><use href="#steam"/></svg>
    <svg class="i12" viewBox="0 0 12 12"><path d="M.5 4.500H2l3-3v9l-3-3H.5zM6.500 4c1 1 1 3 0 4M8.200 2.500c2 2 2 5 0 7M10 1.200c2.300 2.700 2.300 7 0 9.600" class="thin"/></svg>
    <svg class="i12" viewBox="0 0 12 12"><path d="M4 0h4v7H4zM2 6h8v2L7 9.500V12H5V9.500L2 8z"/></svg>
    <svg class="i12" viewBox="0 0 12 12"><path d="M1 2h7l3-1v9H1zM3.500 4.500h3M3.500 4.500v3h2" class="thin"/><circle cx="9" cy="9" r="2.700" fill="#f0a02c"/></svg>
    <svg class="i12" viewBox="0 0 12 12"><path d="M3 2.500h8.500v6H3zM7 8.500V11M4.500 11h5M.5 1h3v3.500h-3zM2 4.500V11" class="thin"/></svg>
    <time>15:42</time>
    <svg class="i12" viewBox="0 0 12 12"><path d="M.5 1h11v8H7.500L6 10.800 4.500 9h-4z" class="thin"/></svg>
  </div>
</footer>
<svg class="cursor" viewBox="0 0 9 14"><path d="M.5.5v11L3 9.200l1.700 4 1.800-.8-1.700-3.800h3.500z" fill="#fff" stroke="#222" stroke-width=".6"/></svg>
</body>
</html>
```
FILE: styles.css
```css
* { box-sizing: border-box; margin: 0; padding: 0; }
body { height: 100vh; min-height: 720px; display: flex; flex-direction: column; background: #000; color: #fff; font-family: Inter, sans-serif; font-size: 9px; overflow: hidden; }
button, input { font: inherit; color: inherit; background: none; border: 0; }
button { display: flex; align-items: center; justify-content: center; }
a { color: inherit; text-decoration: none; }
ul, ol { list-style: none; }
svg { display: block; flex: none; fill: currentColor; }
.sprite { position: absolute; width: 0; height: 0; }
.line { fill: none; stroke: currentColor; stroke-width: 1.4; }
.thin { fill: none; stroke: currentColor; stroke-width: 1; }
.i8 { width: 8px; height: 8px; }
.i9 { width: 9px; height: 9px; }
.i10 { width: 10px; height: 10px; }
.i11 { width: 11px; height: 11px; }
.i12 { width: 12px; height: 12px; }
.i13 { width: 13px; height: 13px; }
.i14 { width: 14px; height: 14px; }
.teal { color: #35e8b8; }
.green { color: #53fc18; }
.lilac { color: #c592f2; }
.rose { color: #f9b6c4; }

/* Browser frame */
.browser { background: #7a22bf; font-family: Roboto, sans-serif; border-bottom: 1px solid #8050a5; }
.tabstrip { height: 27px; background: #49146f; display: flex; align-items: flex-end; padding-left: 4px; }
.tab-search { width: 19px; height: 22px; margin-bottom: 1px; border-radius: 6px; background: #671ea2; }
.tab { width: 154px; height: 23px; margin-left: 4px; padding: 0 6px 3px 5px; border-radius: 6px 6px 0 0; background: #7a22bf; display: flex; align-items: center; gap: 5px; font-size: 8px; }
.tab button { margin-left: auto; }
.newtab { width: 19px; height: 26px; margin-left: 4px; }
.window-controls { margin-left: auto; height: 27px; display: flex; }
.window-controls button { width: 31px; }
.toolbar { height: 30px; padding: 0 8px 0 9px; display: flex; align-items: center; gap: 12px; }
.toolbar .nav { margin-right: 2px; }
.toolbar .dim { opacity: .5; }
.omnibox { flex: 1; height: 22px; margin: 0 -2px 0 0; padding: 0 11px 0 4px; border-radius: 11px; background: #611f94; display: flex; align-items: center; gap: 6px; font-size: 9px; }
.omnibox .site { width: 15px; height: 16px; border-radius: 8px; background: #7028a6; }
.omnibox > button:last-child { margin-left: auto; }
.url span { opacity: .7; }
.rule { width: 1px; height: 10px; background: #5a1a92; }
.bookmarks { height: 23px; padding: 0 8px 5px; display: flex; align-items: center; gap: 11px; font-size: 8px; }
.bookmarks a { display: flex; align-items: center; gap: 4px; }
.bookmarks .rule { margin: 0 -1px; }

/* Application bar */
.appbar { height: 40px; padding: 0 27px 0 15px; background: #141618; display: flex; align-items: center; gap: 14px; flex: none; }
.logo { display: flex; color: #53fc18; font-size: 21px; line-height: 20px; font-weight: 900; -webkit-text-stroke: 1px #53fc18; }
.logo sup { color: #fff; font-size: 5px; line-height: 8px; font-weight: 700; -webkit-text-stroke: 0; }
.avatar { width: 21px; height: 21px; margin-left: auto; }
.avatar svg { width: 21px; height: 21px; }

/* Workspace */
.workspace { flex: 1; min-height: 0; display: grid; grid-template-columns: 37px minmax(0, 361fr) minmax(0, 831fr) 42px; column-gap: 3px; position: relative; }
.side, .rail { background: #141618; display: flex; flex-direction: column; align-items: center; }
.side { padding-top: 8px; gap: 1px; }
.side button { width: 21px; height: 26px; border-radius: 2px; }
.side .on, .rail .on { background: #303234; }
.panel { margin: 2px 0 3px; background: #141618; display: flex; flex-direction: column; min-height: 0; position: relative; }
.panel-head { height: 27px; padding: 0 12px 0 5px; background: #1e2022; display: flex; align-items: center; gap: 6px; flex: none; }
.panel-head h2 { font-size: 10px; font-weight: 600; }
.filter { margin-left: auto; margin-right: 11px; font-size: 10px; font-weight: 600; }
.end { margin-left: auto; }

/* Activity feed */
.events { flex: 1; margin: 5px 12px 12px; display: flex; flex-direction: column; }
.events li { flex: 1 0 auto; padding: 5px 0 4px; border-bottom: 1px solid #232527; display: flex; gap: 8px; }
.events li > svg { margin-top: 4px; }
.events li > svg:not(.teal, .green) { color: #e8e9ea; }
.events li > div { flex: 1; }
.top { display: flex; justify-content: space-between; margin-right: -2px; line-height: 12px; }
.top b { font-size: 9px; font-weight: 700; color: #fff; }
.top time { font-size: 8px; color: #777b80; }
.events p { margin-top: 3px; font-size: 8px; line-height: 10px; font-weight: 500; color: #a3a6aa; }
.events em { font-style: normal; font-weight: 600; color: #53fc18; }

/* Chat */
.leaders { height: 43px; display: flex; align-items: center; justify-content: center; gap: 4px; font-size: 9px; color: #a4a7ab; }
.medal { width: 19px; height: 21px; }
.first { display: grid; gap: 2px; margin-right: 3px; }
.first b { color: #fbb863; font-weight: 700; }
.first span { display: flex; align-items: center; gap: 4px; }
.rest { display: grid; grid-template-columns: auto auto auto auto; align-items: center; gap: 3px 4px; line-height: 13px; font-weight: 500; }
.rest b { color: #ff8b20; font-weight: 600; }
.rest b + span { text-align: right; }
.handle { display: flex; align-items: center; gap: 5px; height: 12px; flex: none; }
.handle::before, .handle::after { content: ""; flex: 1; height: 1px; background: #2a2c2e; }
.reply { height: 8px; margin: 3px 0 -2px; padding: 0 13px; display: flex; align-items: center; gap: 3px; font-size: 8px; color: #5f6265; font-weight: 500; }
.messages { flex: 1; margin: 0 11px 0 7px; display: flex; flex-direction: column; }
.messages li { flex: 1 0 20px; height: 20px; padding: 0 6px; display: flex; align-items: center; gap: 3px; }
.messages .hit { flex-basis: 21px; height: 21px; padding: 0 5px; border: 1px solid #4aa62d; border-radius: 5px; }
.messages b { font-weight: 600; }
.feet { align-self: flex-end; }
.face { width: 19px; height: 19px; }
.c-violet { color: #8f4be8; }
.c-mint { color: #2bd3a0; }
.c-pink { color: #f2b4cc; }
.c-lime { color: #63ec3b; }
.c-blue { color: #2a66d8; }
.c-orange { color: #ef8b22; }
.c-sky { color: #659ce8; }
.c-gray { color: #a3a5a8; }
.c-plum { color: #a52bb0; }
.c-red { color: #a51733; }
.c-hot { color: #ee3567; }
.thumb { position: absolute; right: 0; bottom: 107px; width: 3px; height: 23px; background: #55585a; border-radius: 1px; }
.composer { padding: 7px 14px 8px 13px; flex: none; }
.mode { height: 12px; display: flex; align-items: center; gap: 3px; font-size: 8px; color: #96999d; }
.emotes { display: flex; justify-content: space-between; margin: 3px 0 4px; }
.emotes svg { width: 17px; height: 16px; }
.field { height: 30px; padding: 0 10px; border: 1px solid #45484a; border-radius: 2px; display: flex; align-items: center; gap: 11px; }
.field input { flex: 1; min-width: 0; font-size: 10px; outline: 0; }
.field input::placeholder { color: #75787b; opacity: 1; }
.mic { width: 12px; height: 14px; }
.actions { display: flex; align-items: center; gap: 14px; margin-top: 6px; padding-left: 5px; }
.actions button { gap: 2px; }
.inf { width: 13px; height: 8px; }
.actions .push { margin-left: auto; margin-right: 4px; }
.actions .send { height: 21px; padding: 0 7px; margin-left: -2px; border-radius: 2px; background: #53fc18; color: #123b08; font-size: 10px; font-weight: 600; }

/* Widget rail */
.rail { padding-top: 7px; gap: 11px; }
.rail button { width: 27px; height: 26px; border-radius: 2px; }
.rail hr { width: 16px; height: 1px; border: 0; background: #303234; }
.rail .ring { border: 1px solid #4aa62d; }
.rail .clip { width: 23px; background: #0fd51f; }
.help { position: absolute; right: 13px; bottom: 14px; width: 32px; height: 32px; border-radius: 50%; background: #0bf713; }
.help svg { width: 19px; height: 19px; }

/* Desktop taskbar */
.taskbar { height: 20px; flex: none; display: flex; background: linear-gradient(90deg, #17191b 0, #1d1d1f 75%, #29301f 84%, #303a22 93%, #22271e 100%); }
.taskbar > button { width: 25px; }
.taskbar .open { border-bottom: 1px solid #d48bea; }
.taskbar .front { background: #48494b; }
.tray { margin-left: auto; padding-right: 16px; display: flex; align-items: center; gap: 4px; font-family: Roboto, sans-serif; }
.tray time { font-size: 8px; margin: 0 7px 0 3px; }
.cursor { position: absolute; left: 653px; top: 625px; width: 9px; height: 14px; }
```
